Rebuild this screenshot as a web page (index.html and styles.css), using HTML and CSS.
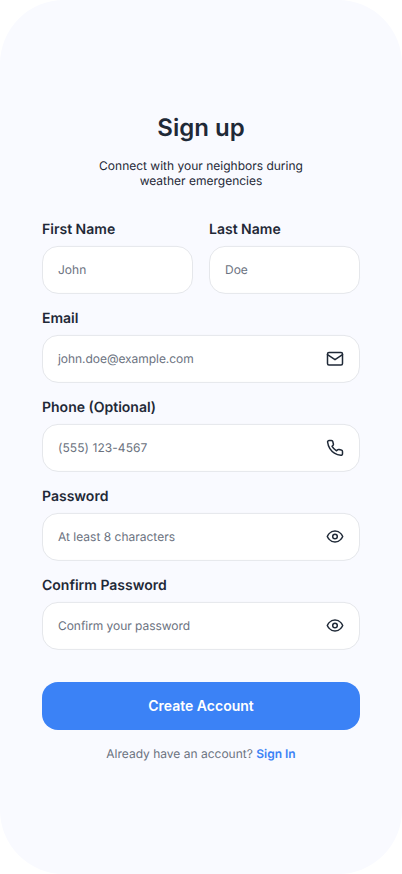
FILE: index.html
```html
<!DOCTYPE html>
<html lang="en">
<head>
<meta charset="utf-8">
<title>Sign up</title>
<link rel="stylesheet" href="styles.css">
</head>
<body>
<main class="screen">
  <h1 class="title">Sign up</h1>
  <p class="subtitle">Connect with your neighbors during<br>weather emergencies</p>
  <form class="form">
    <div class="row">
      <div class="field"><label class="label">First Name</label><div class="box"><span>John</span></div></div>
      <div class="field"><label class="label">Last Name</label><div class="box"><span>Doe</span></div></div>
    </div>
    <div class="field"><label class="label">Email</label><div class="box"><span class="email">john.doe@example.com</span>
      <svg class="icon" viewBox="0 0 18 18"><rect x="1.5" y="2.6" width="15" height="12.4" rx="1.5"/><path d="M1.5 4.8 9 9.8l7.5-5"/></svg></div></div>
    <div class="field"><label class="label">Phone (Optional)</label><div class="box"><span class="phone">(555) 123-4567</span>
      <svg class="icon" viewBox="0 0 24 24" stroke-width="2"><path d="M22 16.92v3a2 2 0 0 1-2.18 2 19.79 19.79 0 0 1-8.63-3.07 19.5 19.5 0 0 1-6-6 19.79 19.79 0 0 1-3.07-8.67A2 2 0 0 1 4.11 2h3a2 2 0 0 1 2 1.72 12.84 12.84 0 0 0 .7 2.81 2 2 0 0 1-.45 2.11L8.09 9.91a16 16 0 0 0 6 6l1.27-1.27a2 2 0 0 1 2.11-.45 12.84 12.84 0 0 0 2.81.7A2 2 0 0 1 22 16.92z"/></svg></div></div>
    <div class="field"><label class="label">Password</label><div class="box"><span>At least 8 characters</span>
      <svg class="icon" viewBox="0 0 18 18"><path d="M1.3 8.6S3.6 3.2 9 3.2s7.7 5.4 7.7 5.4S14.4 14 9 14 1.3 8.6 1.3 8.6Z"/><circle cx="9" cy="8.6" r="2.3"/></svg></div></div>
    <div class="field"><label class="label">Confirm Password</label><div class="box"><span class="confirm">Confirm your password</span>
      <svg class="icon" viewBox="0 0 18 18"><path d="M1.3 8.6S3.6 3.2 9 3.2s7.7 5.4 7.7 5.4S14.4 14 9 14 1.3 8.6 1.3 8.6Z"/><circle cx="9" cy="8.6" r="2.3"/></svg></div></div>
    <button class="submit" type="button">Create Account</button>
  </form>
  <p class="footer">Already have an account? <a class="link">Sign In</a></p>
</main>
</body>
</html>
```
FILE: styles.css
```css
* { box-sizing: border-box; }
body { margin: 0; background: #fff; font-family: Inter, sans-serif; color: #1f2937; text-rendering: geometricPrecision; }
.screen { width: 402px; height: 874px; padding: 113px 42px 0; background: #f9faff; border-radius: 64px; overflow: hidden; }
.title { margin: 0; font-size: 24px; line-height: 30px; font-weight: 600; text-align: center; }
.subtitle { margin: 15px 0 0; font-size: 12px; line-height: 15px; text-align: center; }
.form { display: flex; flex-direction: column; gap: 16px; margin-top: 32.5px; transform: translateY(-0.1px); }
.row { display: flex; gap: 16px; }
.row .field { flex: 1; }
.field { display: flex; flex-direction: column; gap: 7px; }
.label { font-size: 14px; line-height: 18px; font-weight: 600; }
.box { display: flex; align-items: center; justify-content: space-between; height: 48px; padding: 0 15px; border: 1px solid #e5e7eb; border-radius: 16px; background: #fff; font-size: 12px; line-height: 15px; color: #6b7280; }
.email, .confirm { letter-spacing: -0.05px; }
.phone { letter-spacing: 0.07px; }
.icon { width: 18px; height: 18px; fill: none; stroke: #1f2937; stroke-linecap: round; stroke-linejoin: round; }
.icon[viewBox="0 0 18 18"] { stroke-width: 1.5; }
.submit { height: 48px; margin-top: 16px; border: 0; border-radius: 16px; background: #3b82f6; color: #fff; font: 600 14px/17px Inter, sans-serif; }
.footer { margin: 16px 0 0; font-size: 12px; line-height: 15px; text-align: center; color: #6b7280; }
.link { color: #3b82f6; font-weight: 600; }
```
